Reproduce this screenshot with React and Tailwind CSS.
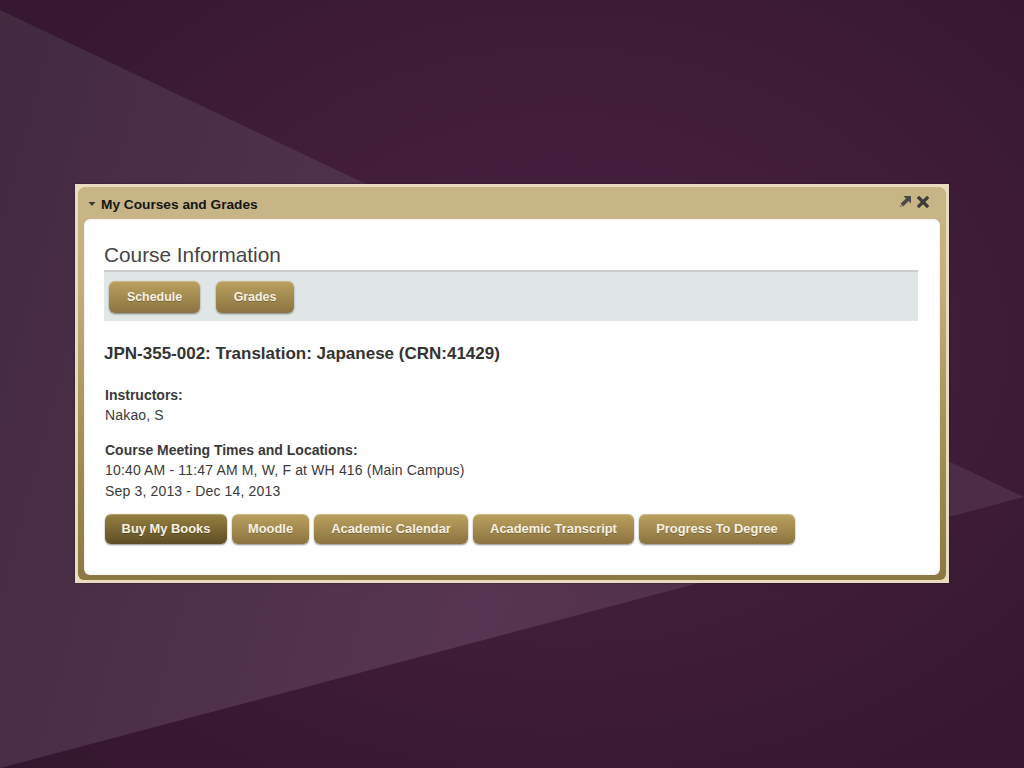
import React from "react";

const font = { fontFamily: '"Liberation Sans", Arial, Helvetica, sans-serif' };

function GoldButton({ children, dark, className = "" }) {
  return (
    <button
      className={
        "rounded-[6px] font-bold text-[#f7f1e2] shadow-[0_1px_2px_rgba(0,0,0,0.45),inset_0_1px_0_rgba(255,255,255,0.25)] [text-shadow:0_1px_0_rgba(0,0,0,0.25)] " +
        (dark
          ? "bg-[linear-gradient(to_bottom,#96803f,#5f4d26)] "
          : "bg-[linear-gradient(to_bottom,#bba15f,#8a7340)] ") +
        className
      }
    >
      {children}
    </button>
  );
}

function PinIcon() {
  return (
    <svg width="13" height="13" viewBox="0 0 13 13">
      <path d="M4.5 1 H12 V8.5 L9.6 6.1 L4.2 11.5 L1.5 8.8 L6.9 3.4 Z" fill="#4a4a4a" />
      <path d="M1 10 L3 12 L1 12 Z" fill="#6a6a6a" />
    </svg>
  );
}

function CloseIcon() {
  return (
    <svg width="12" height="12" viewBox="0 0 12 12">
      <path d="M2 2 L10 10 M10 2 L2 10" stroke="#3c3c3c" strokeWidth="3.2" strokeLinecap="square" />
    </svg>
  );
}

export default function App() {
  return (
    <div
      className="relative w-[1024px] h-[768px] overflow-hidden bg-[radial-gradient(ellipse_at_55%_45%,#4a2243_0%,#3f1c38_50%,#33162c_100%)]"
      style={font}
    >
      <svg className="absolute inset-0" width="1024" height="768" viewBox="0 0 1024 768">
        <defs>
          <linearGradient id="tri" x1="0" y1="0" x2="1" y2="0.2">
            <stop offset="0" stopColor="#432a3f" />
            <stop offset="0.6" stopColor="#573552" />
            <stop offset="1" stopColor="#4c2c47" />
          </linearGradient>
        </defs>
        <polygon points="0,10 1024,497 0,768" fill="url(#tri)" />
      </svg>

      <div className="relative pt-[184px] pl-[75px]">
        <div className="w-[874px] h-[399px] bg-[#e7dcbf] p-[3px] shadow-[0_0_2px_rgba(0,0,0,0.4)]">
          <div className="h-full rounded-t-[8px] rounded-b-[6px] bg-[linear-gradient(to_bottom,#c8b686_0%,#c3ae7e_25%,#a89158_60%,#8c7843_100%)] px-[6px] pb-[5px] flex flex-col">
            <div className="h-[32px] flex items-center pt-[5px] bg-[#c7b586] rounded-t-[8px] -mx-[6px] pl-[10px] pr-[11px]">
              <svg width="8" height="6" viewBox="0 0 8 6" className="mr-[5px] mt-[-3px]">
                <path d="M0.5 1 H7.5 L4 5 Z" fill="#3a3a3a" />
              </svg>
              <span className="text-[13.7px] font-bold text-[#151515]">My Courses and Grades</span>
              <div className="ml-auto flex items-center gap-[5px] mt-[-8px] mr-[6px]">
                <PinIcon />
                <CloseIcon />
              </div>
            </div>
            <div className="flex-1 bg-white rounded-[6px] pl-[20px] pr-[22px] pt-[24px] shadow-[inset_0_0_2px_rgba(0,0,0,0.15)]">
              <div className="text-[20.8px] leading-[24px] text-[#454545] pb-[3px] border-b-2 border-[#c9cdcd]">
                Course Information
              </div>
              <div className="bg-[#e1e6e6] h-[49px] pt-[9px] pl-[5px] flex gap-[16px]">
                <GoldButton className="h-[32px] w-[91px] text-[12.4px]">Schedule</GoldButton>
                <GoldButton className="h-[32px] w-[78px] text-[12.4px]">Grades</GoldButton>
              </div>
              <div className="mt-[23px] text-[17px] leading-[20px] font-bold text-[#333]">
                JPN-355-002: Translation: Japanese (CRN:41429)
              </div>
              <div className="pl-[1px] text-[14px] leading-[20px] text-[#3a3a3a]">
                <div className="mt-[21px] font-bold">Instructors:</div>
                <div className="tracking-[0.16px]">Nakao, S</div>
                <div className="mt-[15px] font-bold">Course Meeting Times and Locations:</div>
                <div className="leading-[20.5px] tracking-[0.16px]">10:40 AM - 11:47 AM M, W, F at WH 416 (Main Campus)</div>
                <div className="leading-[20.5px] tracking-[0.16px]">Sep 3, 2013 - Dec 14, 2013</div>
              </div>
              <div className="mt-[13px] pl-[1px] flex gap-[5px]">
                <GoldButton dark className="h-[30px] w-[122px] text-[12.9px]">Buy My Books</GoldButton>
                <GoldButton className="h-[30px] w-[77px] text-[12.9px]">Moodle</GoldButton>
                <GoldButton className="h-[30px] w-[154px] text-[12.9px]">Academic Calendar</GoldButton>
                <GoldButton className="h-[30px] w-[161px] text-[12.9px]">Academic Transcript</GoldButton>
                <GoldButton className="h-[30px] w-[156px] text-[12.9px]">Progress To Degree</GoldButton>
              </div>
            </div>
          </div>
        </div>
      </div>
    </div>
  );
}
